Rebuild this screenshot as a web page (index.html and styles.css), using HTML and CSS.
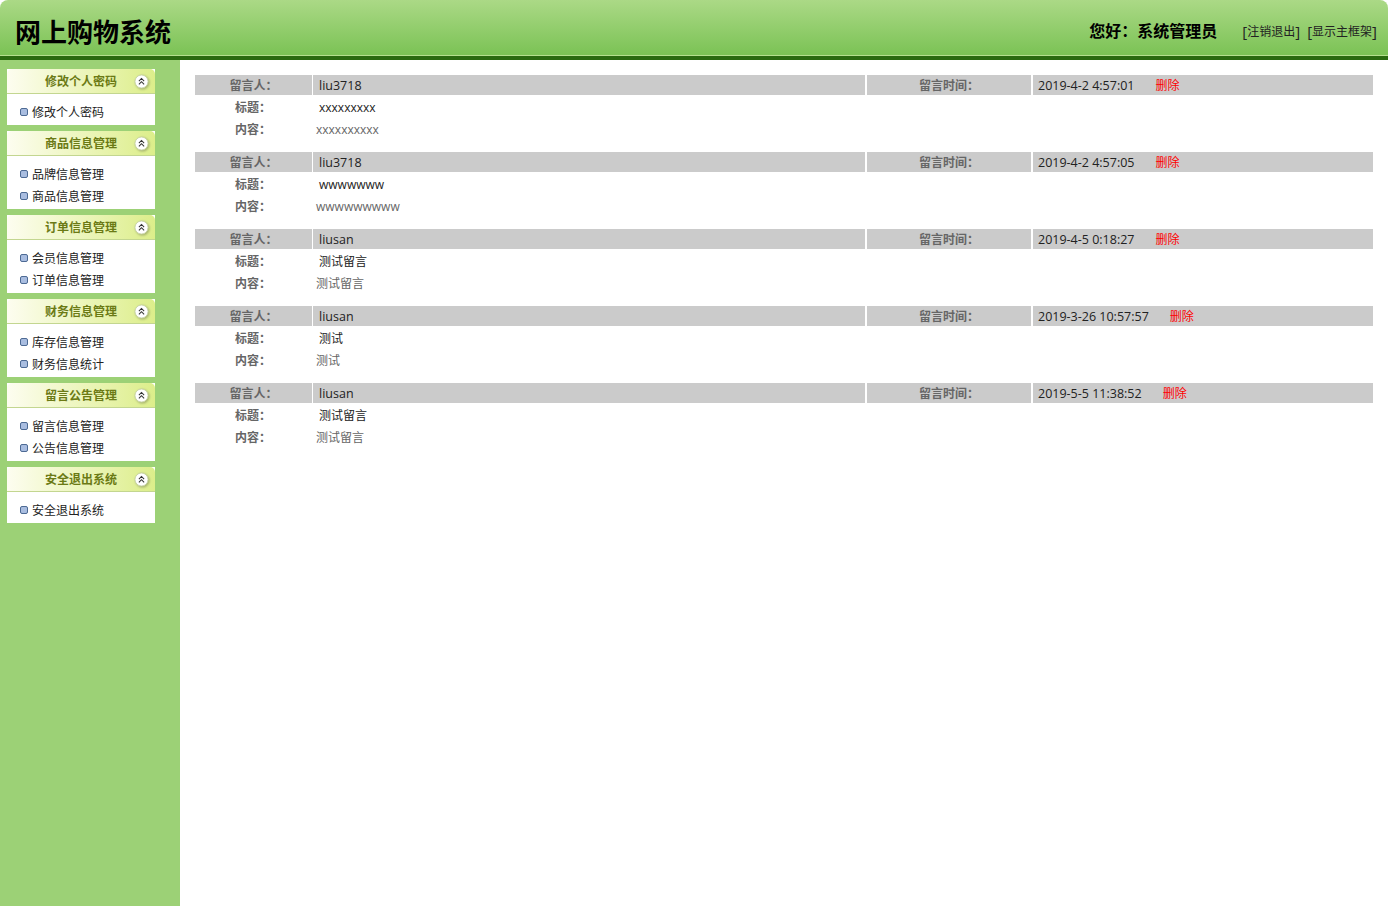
FILE: index.html
```html
<!DOCTYPE html>
<html lang="zh-CN">
<head>
<meta charset="utf-8">
<title>网上购物系统</title>
<link rel="stylesheet" href="styles.css">
</head>
<body>
<header class="top">
  <h1 class="logo">网上购物系统</h1>
  <div class="user">
    <span class="hello">您好：系统管理员</span>
    <span class="links"><span class="br">[</span><a>注销退出</a><span class="br">]</span><span class="br gap">[</span><a>显示主框架</a><span class="br">]</span></span>
  </div>
</header>
<div class="main">
  <aside class="side">
    <section class="panel">
      <div class="ph"><span class="pt">修改个人密码</span><svg class="tog" viewBox="0 0 16 16"><circle cx="8" cy="8" r="7" fill="#fff" stroke="#c6d2a2"/><path d="M5.2 7.6 8 4.8l2.8 2.8M5.2 11 8 8.2l2.8 2.8" fill="none" stroke="#333" stroke-width="1.1"/></svg></div>
      <ul class="pb"><li>修改个人密码</li></ul>
    </section>
    <section class="panel">
      <div class="ph"><span class="pt">商品信息管理</span><svg class="tog" viewBox="0 0 16 16"><circle cx="8" cy="8" r="7" fill="#fff" stroke="#c6d2a2"/><path d="M5.2 7.6 8 4.8l2.8 2.8M5.2 11 8 8.2l2.8 2.8" fill="none" stroke="#333" stroke-width="1.1"/></svg></div>
      <ul class="pb"><li>品牌信息管理</li><li>商品信息管理</li></ul>
    </section>
    <section class="panel">
      <div class="ph"><span class="pt">订单信息管理</span><svg class="tog" viewBox="0 0 16 16"><circle cx="8" cy="8" r="7" fill="#fff" stroke="#c6d2a2"/><path d="M5.2 7.6 8 4.8l2.8 2.8M5.2 11 8 8.2l2.8 2.8" fill="none" stroke="#333" stroke-width="1.1"/></svg></div>
      <ul class="pb"><li>会员信息管理</li><li>订单信息管理</li></ul>
    </section>
    <section class="panel">
      <div class="ph"><span class="pt">财务信息管理</span><svg class="tog" viewBox="0 0 16 16"><circle cx="8" cy="8" r="7" fill="#fff" stroke="#c6d2a2"/><path d="M5.2 7.6 8 4.8l2.8 2.8M5.2 11 8 8.2l2.8 2.8" fill="none" stroke="#333" stroke-width="1.1"/></svg></div>
      <ul class="pb"><li>库存信息管理</li><li>财务信息统计</li></ul>
    </section>
    <section class="panel">
      <div class="ph"><span class="pt">留言公告管理</span><svg class="tog" viewBox="0 0 16 16"><circle cx="8" cy="8" r="7" fill="#fff" stroke="#c6d2a2"/><path d="M5.2 7.6 8 4.8l2.8 2.8M5.2 11 8 8.2l2.8 2.8" fill="none" stroke="#333" stroke-width="1.1"/></svg></div>
      <ul class="pb"><li>留言信息管理</li><li>公告信息管理</li></ul>
    </section>
    <section class="panel">
      <div class="ph"><span class="pt">安全退出系统</span><svg class="tog" viewBox="0 0 16 16"><circle cx="8" cy="8" r="7" fill="#fff" stroke="#c6d2a2"/><path d="M5.2 7.6 8 4.8l2.8 2.8M5.2 11 8 8.2l2.8 2.8" fill="none" stroke="#333" stroke-width="1.1"/></svg></div>
      <ul class="pb"><li>安全退出系统</li></ul>
    </section>
  </aside>
  <main class="content">
    <article class="msg">
      <div class="lab who">留言人：</div><div class="val name">liu3718</div><div class="lab">留言时间：</div><div class="val">2019-4-2 4:57:01<a class="del">删除</a></div>
      <div class="sub">标题：</div><div class="title">xxxxxxxxx</div>
      <div class="sub">内容：</div><div class="body">xxxxxxxxxx</div>
    </article>
    <article class="msg">
      <div class="lab who">留言人：</div><div class="val name">liu3718</div><div class="lab">留言时间：</div><div class="val">2019-4-2 4:57:05<a class="del">删除</a></div>
      <div class="sub">标题：</div><div class="title">wwwwwww</div>
      <div class="sub">内容：</div><div class="body">wwwwwwwww</div>
    </article>
    <article class="msg">
      <div class="lab who">留言人：</div><div class="val name">liusan</div><div class="lab">留言时间：</div><div class="val">2019-4-5 0:18:27<a class="del">删除</a></div>
      <div class="sub">标题：</div><div class="title">测试留言</div>
      <div class="sub">内容：</div><div class="body">测试留言</div>
    </article>
    <article class="msg">
      <div class="lab who">留言人：</div><div class="val name">liusan</div><div class="lab">留言时间：</div><div class="val">2019-3-26 10:57:57<a class="del">删除</a></div>
      <div class="sub">标题：</div><div class="title">测试</div>
      <div class="sub">内容：</div><div class="body">测试</div>
    </article>
    <article class="msg">
      <div class="lab who">留言人：</div><div class="val name">liusan</div><div class="lab">留言时间：</div><div class="val">2019-5-5 11:38:52<a class="del">删除</a></div>
      <div class="sub">标题：</div><div class="title">测试留言</div>
      <div class="sub">内容：</div><div class="body">测试留言</div>
    </article>
  </main>
</div>
</body>
</html>
```
FILE: styles.css
```css
* { box-sizing: border-box; }
html, body { margin: 0; height: 100%; }
body {
  font-family: "Open Sans", "Noto Sans CJK SC", sans-serif;
  font-size: 12px;
  color: #000;
  background: #fff;
  display: flex;
  flex-direction: column;
  height: 906px;
  overflow: hidden;
}
.top {
  height: 60px;
  flex: none;
  display: flex;
  justify-content: space-between;
  align-items: center;
  padding: 0 11px 0 15px;
  background: linear-gradient(#abd986, #7ac254);
  border-top-right-radius: 8px;
  border-top-left-radius: 8px;
  border-bottom: 4px solid #2a6a10;
  box-shadow: inset 0 -1px 0 #b4e08e;
}
.logo {
  margin: 6px 0 0;
  font: 700 26px/30px "Noto Sans CJK SC", sans-serif;
  color: #000;
}
.user { display: flex; align-items: center; gap: 25px; margin-top: 3px; }
.hello { font: 700 16px/24px "Noto Sans CJK SC", sans-serif; }
.links { font: 12px/20px "Noto Sans CJK SC", sans-serif; color: #222; display: flex; align-items: center; margin-top: 3px; }
.br { font-size: 15px; font-family: "Open Sans", sans-serif; margin-top: -1px; }
.gap { margin-left: 7px; }
.main { flex: 1; display: flex; min-height: 0; }
.side {
  width: 180px;
  flex: none;
  background: #9cd176;
  padding: 9px 25px 0 7px;
  display: flex;
  flex-direction: column;
  gap: 6px;
}
.panel { background: #fff; }
.ph {
  height: 25px;
  display: flex;
  align-items: center;
  justify-content: center;
  position: relative;
  background: linear-gradient(90deg, #fdfdf0, #dcee8a);
  border-bottom: 1px solid #c3d690;
  border-radius: 5px 5px 0 0;
}
.pt { font: 700 12px/16px "Noto Sans CJK SC", sans-serif; color: #6b7a15; margin-top: -1px; }
.tog {
  position: absolute;
  right: 6px;
  top: 5px;
  width: 15px;
  height: 15px;
  filter: drop-shadow(1px 1px 1px rgba(90, 100, 60, .45));
}
.pb { list-style: none; margin: 0; padding: 7px 0 0 25px; }
.pb li {
  height: 22px;
  line-height: 22px;
  position: relative;
  font-family: "Noto Sans CJK SC", sans-serif;
  color: #222;
}
.pb li:last-child { height: 24px; }
.pb li::before {
  content: "";
  position: absolute;
  left: -12px;
  top: 7px;
  width: 6px;
  height: 6px;
  background: #a9bde0;
  border: 1px solid #4d6a94;
  border-radius: 2px;
}
.content { flex: 1; min-width: 0; padding: 15px 15px 0; }
.msg {
  display: grid;
  grid-template-columns: 116px 552px 164px 340px;
  column-gap: 2px;
  margin-bottom: 13px;
}
.lab {
  height: 20px;
  background: #cbcbcb;
  color: #666;
  font: 700 12px/20px "Noto Sans CJK SC", sans-serif;
  text-align: center;
}
.who { margin-right: -1px; }
.val {
  height: 20px;
  background: #cbcbcb;
  line-height: 21px;
  padding-left: 5px;
  color: #222;
  font-size: 12.5px;
}
.name { padding-left: 6px; }
.del { color: #f00; margin-left: 21px; font-size: 12px; }
.sub {
  height: 22px;
  line-height: 26px;
  color: #666;
  font-weight: 700;
  text-align: center;
}
.title { grid-column: 2 / 5; height: 22px; line-height: 25px; padding-left: 6px; color: #222; }
.body { grid-column: 2 / 5; height: 22px; line-height: 25px; padding-left: 3px; color: #666; }
```
